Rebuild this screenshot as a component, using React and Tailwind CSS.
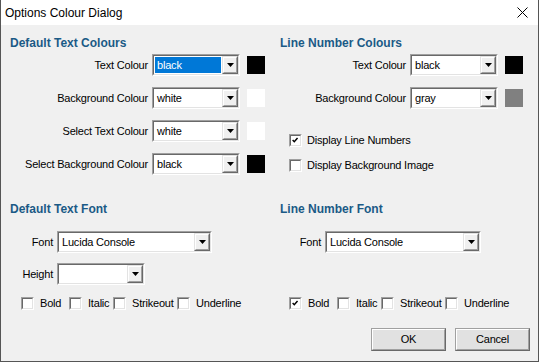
import React from 'react';

// classic sunken / raised 3D edges
function Sunken({ className = '', children }) {
  return (
    <div className={`border border-t-[#a0a0a0] border-l-[#a0a0a0] border-b-white border-r-white ${className}`}>
      <div className="h-full w-full border border-t-[#696969] border-l-[#696969] border-b-[#e3e3e3] border-r-[#e3e3e3] bg-white flex items-center">
        {children}
      </div>
    </div>
  );
}

function Combo({ value, width = 'w-[88px]', selected }) {
  return (
    <Sunken className={`${width} h-[22px] shrink-0`}>
      <div className="flex-1 h-full p-px flex items-center min-w-0">
        <div className={`h-full w-full flex items-center pl-[2px] ${selected ? 'bg-[#0078d7] text-white' : ''}`}>{value}</div>
      </div>
      <div className="w-[16px] h-full border border-t-[#e3e3e3] border-l-[#e3e3e3] border-b-[#696969] border-r-[#696969] shrink-0">
        <div className="h-full w-full border border-t-white border-l-white border-b-[#a0a0a0] border-r-[#a0a0a0] bg-[#f0f0f0] flex items-center justify-center">
          <svg width="7" height="4" viewBox="0 0 7 4"><path d="M0 0h7L3.5 4z" fill="#000" /></svg>
        </div>
      </div>
    </Sunken>
  );
}

function Check({ checked }) {
  return (
    <Sunken className="w-[13px] h-[13px] shrink-0">
      {checked && (
        <svg width="11" height="11" viewBox="0 0 11 11" className="block">
          <path d="M2 5l2 2 4-4.5" fill="none" stroke="#000" strokeWidth="1.8" />
        </svg>
      )}
    </Sunken>
  );
}

function ColourRow({ label, value, swatch, labelW, selected }) {
  return (
    <div className="flex items-center h-[22px]">
      <div className={`${labelW} text-right pr-[4px] whitespace-nowrap`}>{label}</div>
      <Combo value={value} selected={selected} />
      <div className="w-[18px] h-[18px] ml-[7px]" style={{ background: swatch }} />
    </div>
  );
}

function Heading({ children }) {
  return <div className="h-[14px] leading-[14px] text-[12px] font-bold text-[#1b5a86] tracking-normal">{children}</div>;
}

function StyleChecks({ bold }) {
  const items = [
    { label: 'Bold', w: 'w-[48px]', on: bold },
    { label: 'Italic', w: 'w-[44px]' },
    { label: 'Strikeout', w: 'w-[64px]' },
    { label: 'Underline', w: '' },
  ];
  return (
    <div className="flex items-center h-[13px]">
      {items.map((it) => (
        <div key={it.label} className={`flex items-center gap-[6px] ${it.w}`}>
          <Check checked={it.on} />
          <span>{it.label}</span>
        </div>
      ))}
    </div>
  );
}

function Button({ children }) {
  return (
    <div className="w-[75px] h-[23px] border border-t-[#a0a0a0] border-l-[#a0a0a0] border-b-[#696969] border-r-[#696969]">
      <div className="h-full w-full border border-t-white border-l-white border-b-[#a0a0a0] border-r-[#a0a0a0] bg-[#e1e1e1] flex items-center justify-center">
        {children}
      </div>
    </div>
  );
}

export default function App() {
  return (
    <div className="w-[539px] h-[362px] bg-[#f0f0f0] border-x border-b border-[#555] flex flex-col font-['Liberation_Sans',Arial,sans-serif] text-[11px] text-black tracking-[-0.2px] overflow-hidden">
      {/* title bar */}
      <div className="h-[25px] bg-white flex items-center justify-between pl-[4px] pr-[10px] shrink-0">
        <span className="text-[12px] tracking-normal">Options Colour Dialog</span>
        <svg width="11" height="11" viewBox="0 0 11 11"><path d="M0.5 0.5l10 10M10.5 0.5l-10 10" stroke="#000" strokeWidth="1" /></svg>
      </div>

      {/* colours */}
      <div className="flex pt-[11px]">
        <div className="w-[269px] pl-[9px] flex flex-col">
          <Heading>Default Text Colours</Heading>
          <div className="flex flex-col gap-[11px] mt-[4px]">
            <ColourRow label="Text Colour" value="black" swatch="#000" labelW="w-[142px]" selected />
            <ColourRow label="Background Colour" value="white" swatch="#fff" labelW="w-[142px]" />
            <ColourRow label="Select Text Colour" value="white" swatch="#fff" labelW="w-[142px]" />
            <ColourRow label="Select Background Colour" value="black" swatch="#000" labelW="w-[142px]" />
          </div>
        </div>
        <div className="flex-1 pl-[10px] flex flex-col">
          <Heading>Line Number Colours</Heading>
          <div className="flex flex-col gap-[11px] mt-[4px]">
            <ColourRow label="Text Colour" value="black" swatch="#000" labelW="w-[130px]" />
            <ColourRow label="Background Colour" value="gray" swatch="#808080" labelW="w-[130px]" />
          </div>
          <div className="flex flex-col gap-[12px] mt-[25px] ml-[9px]">
            <div className="flex items-center gap-[5px] h-[13px]"><Check checked /><span>Display Line Numbers</span></div>
            <div className="flex items-center gap-[5px] h-[13px]"><Check /><span>Display Background Image</span></div>
          </div>
        </div>
      </div>

      {/* fonts */}
      <div className="flex mt-[27px]">
        <div className="w-[269px] pl-[9px] flex flex-col">
          <Heading>Default Text Font</Heading>
          <div className="flex items-center h-[22px] mt-[15px]">
            <div className="w-[47px] text-right pr-[4px]">Font</div>
            <Combo value="Lucida Console" width="w-[155px]" />
          </div>
          <div className="flex items-center h-[22px] mt-[10px]">
            <div className="w-[47px] text-right pr-[4px]">Height</div>
            <Combo value="" />
          </div>
          <div className="mt-[12px] ml-[11px]"><StyleChecks /></div>
        </div>
        <div className="flex-1 pl-[10px] flex flex-col">
          <Heading>Line Number Font</Heading>
          <div className="flex items-center h-[22px] mt-[15px]">
            <div className="w-[45px] text-right pr-[4px]">Font</div>
            <Combo value="Lucida Console" width="w-[156px]" />
          </div>
          <div className="mt-[44px] ml-[9px]"><StyleChecks bold /></div>
        </div>
      </div>

      {/* buttons */}
      <div className="flex justify-end gap-[9px] pr-[8px] mt-[18px]">
        <Button>OK</Button>
        <Button>Cancel</Button>
      </div>
    </div>
  );
}
